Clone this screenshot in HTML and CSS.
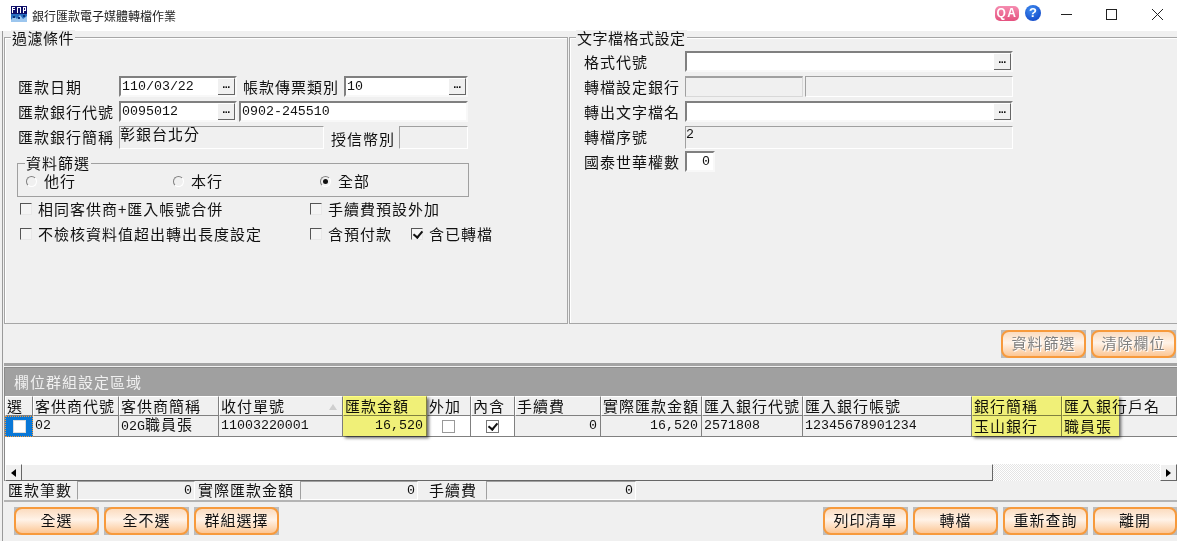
FILE: index.html
```html
<!DOCTYPE html>
<html lang="zh-Hant">
<head>
    <meta charset="UTF-8">
    <meta name="viewport" content="width=device-width, initial-scale=1.0">
    <title>銀行匯款電子媒體轉檔作業</title>
    <link rel="stylesheet" href="styles.css">
</head>
<body>
    <div class="titlebar">
        <svg class="app-icon" width="16" height="16" viewBox="0 0 16 16">
            <rect width="16" height="16" fill="#10106a"/>
            <rect x="1" y="1" width="3" height="1" fill="#fff"/><rect x="1" y="1" width="1" height="6" fill="#fff"/><rect x="1" y="3" width="3" height="1" fill="#fff"/>
            <rect x="6" y="1" width="1" height="6" fill="#fff"/><rect x="9" y="1" width="1" height="6" fill="#fff"/><rect x="6" y="1" width="4" height="1" fill="#fff"/>
            <rect x="12" y="1" width="1" height="6" fill="#fff"/><rect x="12" y="1" width="3" height="1" fill="#fff"/><rect x="14" y="1" width="1" height="3" fill="#fff"/><rect x="12" y="4" width="3" height="1" fill="#fff"/>
            <rect y="8" width="16" height="8" fill="#2a6fc0"/>
            <path d="M0 14l3-4 3 3 3-4 3 4 4-3v6H0z" fill="#9cc6ee"/>
            <path d="M2 10h2v2H2zM7 11h2v2H7zM12 9h2v2h-2z" fill="#0d2f78"/>
        </svg>
        <span class="title-text">銀行匯款電子媒體轉檔作業</span>
        <div class="title-tools">
            <span class="qa-icon">QA</span>
            <span class="help-icon">?</span>
        </div>
        <div class="win-btns">
            <svg width="46" height="31" viewBox="0 0 46 31"><path d="M22 14.500h11" stroke="#222" fill="none"/></svg>
            <svg width="46" height="31" viewBox="0 0 46 31"><rect x="21.500" y="9.500" width="10" height="10" stroke="#222" fill="none"/></svg>
            <svg width="46" height="31" viewBox="0 0 46 31"><path d="M21 9l11 11M32 9L21 20" stroke="#222" fill="none"/></svg>
        </div>
    </div>

    <div class="window">
        <div class="top">
            <div class="panel panel-left">
                <div class="legend">過濾條件</div>
                <div class="form-left">
                    <div class="row">
                        <label class="lbl lbl-left">匯款日期</label>
                        <div class="input w118"><span class="val">110/03/22</span><span class="more">...</span></div>
                        <label class="lbl lbl-type">帳款傳票類別</label>
                        <div class="input w124"><span class="val">10</span><span class="more">...</span></div>
                    </div>
                    <div class="row">
                        <label class="lbl lbl-left">匯款銀行代號</label>
                        <div class="input w118"><span class="val">0095012</span><span class="more">...</span></div>
                        <div class="input w229"><span class="val">0902-245510</span></div>
                    </div>
                    <div class="row row-ro">
                        <label class="lbl lbl-left">匯款銀行簡稱</label>
                        <div class="readonly w205"><span class="ro-text">彰銀台北分</span></div>
                        <label class="lbl lbl-credit">授信幣別</label>
                        <div class="readonly w69"></div>
                    </div>
                </div>

                <div class="filter-box">
                    <div class="filter-legend">資料篩選</div>
                    <div class="radio-row">
                        <span class="opt"><i class="radio"></i>他行</span>
                        <span class="opt"><i class="radio"></i>本行</span>
                        <span class="opt"><i class="radio on"></i>全部</span>
                    </div>
                </div>

                <div class="checks">
                    <span class="chk-item"><i class="chk"></i>相同客供商+匯入帳號合併</span>
                    <span class="chk-item"><i class="chk"></i>手續費預設外加</span>
                    <span></span>
                    <span class="chk-item"><i class="chk"></i>不檢核資料值超出轉出長度設定</span>
                    <span class="chk-item"><i class="chk"></i>含預付款</span>
                    <span class="chk-item"><i class="chk on"></i>含已轉檔</span>
                </div>
            </div>

            <div class="panel panel-right">
                <div class="legend">文字檔格式設定</div>
                <div class="form-right">
                    <div class="row">
                        <label class="lbl lbl-right">格式代號</label>
                        <div class="input w328"><span class="more">...</span></div>
                    </div>
                    <div class="row">
                        <label class="lbl lbl-right">轉檔設定銀行</label>
                        <div class="readonly w118 sunken"></div>
                        <div class="readonly w208"></div>
                    </div>
                    <div class="row">
                        <label class="lbl lbl-right">轉出文字檔名</label>
                        <div class="input w328"><span class="more">...</span></div>
                    </div>
                    <div class="row row-ro">
                        <label class="lbl lbl-right">轉檔序號</label>
                        <div class="readonly w328"><span class="ro-num">2</span></div>
                    </div>
                    <div class="row">
                        <label class="lbl lbl-right">國泰世華權數</label>
                        <div class="input w30 right"><span class="val">0</span></div>
                    </div>
                </div>
            </div>
        </div>

        <div class="actions">
            <button class="btn disabled"><span>資料篩選</span></button>
            <button class="btn disabled"><span>清除欄位</span></button>
        </div>

        <div class="grid-panel">
            <div class="grid-title">欄位群組設定區域</div>
            <table class="grid">
                <colgroup>
                    <col class="c28"><col class="c86"><col class="c100"><col class="c124"><col class="c84"><col class="c44"><col class="c44"><col class="c86"><col class="c101"><col class="c101"><col class="c169"><col class="c90"><col class="c115">
                </colgroup>
                <thead>
                    <tr>
                        <th>選</th><th>客供商代號</th><th>客供商簡稱</th><th class="sorted">收付單號<i class="sort-arrow"></i></th><th>匯款金額</th><th>外加</th><th>內含</th><th>手續費</th><th>實際匯款金額</th><th>匯入銀行代號</th><th>匯入銀行帳號</th><th>銀行簡稱</th><th>匯入銀行戶名</th>
                    </tr>
                </thead>
                <tbody>
                    <tr>
                        <td class="sel"><i class="sel-box"></i></td>
                        <td class="mono">02</td>
                        <td><span class="mono">02G</span>職員張</td>
                        <td class="mono">11003220001</td>
                        <td class="mono num">16,520</td>
                        <td class="white center"><i class="chk flat"></i></td>
                        <td class="white center"><i class="chk flat on"></i></td>
                        <td class="mono num">0</td>
                        <td class="mono num">16,520</td>
                        <td class="mono">2571808</td>
                        <td class="mono">12345678901234</td>
                        <td>玉山銀行</td>
                        <td>職員張</td>
                    </tr>
                </tbody>
            </table>
            <div class="mark mark-amount"></div>
            <div class="mark mark-bank"></div>
            <div class="grid-blank"></div>
            <div class="hscroll">
                <span class="arrow-btn"><i class="tri tri-left"></i></span>
                <span class="thumb"></span>
                <span class="track"></span>
                <span class="arrow-btn"><i class="tri tri-right"></i></span>
            </div>
        </div>

        <div class="summary">
            <span class="sum-label w69">匯款筆數</span>
            <span class="sum-box w118">0</span>
            <span class="sum-label w102">實際匯款金額</span>
            <span class="sum-box w118">0</span>
            <span class="sum-label w65 sum-pad">手續費</span>
            <span class="sum-box w150">0</span>
        </div>

        <div class="footer">
            <div class="btn-group">
                <button class="btn"><span>全選</span></button>
                <button class="btn"><span>全不選</span></button>
                <button class="btn"><span>群組選擇</span></button>
            </div>
            <div class="btn-group">
                <button class="btn"><span>列印清單</span></button>
                <button class="btn"><span>轉檔</span></button>
                <button class="btn"><span>重新查詢</span></button>
                <button class="btn btn-last"><span>離開</span></button>
            </div>
        </div>
    </div>
</body>
</html>
```
FILE: styles.css
```css
* {
    box-sizing: border-box;
}

html, body {
    margin: 0;
    height: 541px;
    overflow: hidden;
}

body {
    background-color: #f0f0f0;
    color: #111;
    font-family: "Noto Sans CJK TC", "Liberation Sans", sans-serif;
    font-size: 15px;
    line-height: 18px;
}

/* Title bar */
.titlebar {
    display: flex;
    align-items: center;
    height: 31px;
    padding-left: 11px;
    background-color: #fff;
}

.app-icon {
    margin: 0 5px 3px 0;
}

.title-text {
    font-size: 12px;
    color: #222;
}

.title-tools {
    display: flex;
    align-items: center;
    gap: 6px;
    margin: 0 -2px 5px auto;
}

.qa-icon {
    width: 24px;
    height: 15px;
    border-radius: 5px;
    background: linear-gradient(#f58cb0, #e5527f);
    color: #fff;
    font: bold 12px/15px "Liberation Sans", sans-serif;
    letter-spacing: 1.500px;
    text-align: center;
}

.help-icon {
    width: 16px;
    height: 16px;
    border-radius: 50%;
    background: radial-gradient(circle at 40% 30%, #3f8cf0, #0a3cc0);
    color: #fff;
    font: bold 13px/16px "Liberation Sans", sans-serif;
    text-align: center;
}

.win-btns {
    display: flex;
    align-items: center;
}

.win-btns svg {
    display: block;
}

/* Window body */
.window {
    height: 510px;
    margin-left: 2px;
    padding-left: 1px;
    border-left: 1px solid #9a9a9a;
}

.top {
    display: flex;
    height: 293px;
    gap: 1px;
}

.panel {
    margin-top: 6px;
    border: 1px solid #a6a6a6;
    box-shadow: inset 1px 1px 0 #fff;
}

.panel-left {
    width: 564px;
    padding: 0 13px;
}

.panel-right {
    flex: 1;
    border-right: 0;
    padding-left: 14px;
}

.legend {
    width: fit-content;
    height: 16px;
    margin: -8px 0 0 -7px;
    padding: 0 1px;
    background-color: #f0f0f0;
    line-height: 16px;
    letter-spacing: 0.5px;
}

.panel-right .legend {
    margin-left: -8px;
}

/* Forms */
.row {
    display: flex;
    align-items: stretch;
    height: 21px;
    margin-bottom: 4px;
}

.row-ro {
    height: 23px;
    margin-bottom: 2px;
}

.form-left {
    margin-top: 30px;
}

.form-right {
    margin-top: 5px;
}

.lbl {
    flex: none;
    line-height: 22px;
    letter-spacing: 1px;
    white-space: nowrap;
}

.lbl-left,
.lbl-right {
    width: 101px;
}

.lbl-type {
    width: 95px;
    margin: 0 6px;
}

.lbl-credit {
    width: 62px;
    margin: 2px 6px 0 7px;
}

.input {
    display: flex;
    flex: none;
    align-items: stretch;
    justify-content: space-between;
    border: 2px solid;
    border-color: #808080 #f8f8f8 #f8f8f8 #808080;
    background-color: #fff;
}

.input + .input {
    margin-left: 2px;
}

.right {
    justify-content: flex-end;
}

.val {
    padding-left: 1px;
    font-family: "Liberation Mono", monospace;
    font-size: 13.3px;
    line-height: 17px;
}

.right .val {
    padding: 0 3px 0 0;
}

.more {
    width: 17px;
    margin-left: auto;
    background-color: #f0f0f0;
    border-right: 1px solid #666;
    border-bottom: 1px solid #666;
    border-top: 1px solid #fff;
    font: bold 11px/11px "Liberation Sans", sans-serif;
    letter-spacing: -0.5px;
    text-align: center;
}

.readonly {
    flex: none;
    border: 1px solid;
    border-color: #a0a0a0 #fff #fff #a0a0a0;
    background-color: #f0f0f0;
}

.sunken {
    margin-right: 2px;
    border-top-width: 2px;
    border-right-color: #d8d8d8;
    border-bottom-color: #d8d8d8;
}

.ro-text {
    display: block;
    line-height: 13px;
    letter-spacing: 1px;
}

.ro-num {
    display: block;
    font-family: "Liberation Mono", monospace;
    font-size: 13.3px;
    line-height: 16px;
}

.w30 { width: 30px; }
.w65 { width: 65px; }
.w69 { width: 69px; }
.w102 { width: 102px; }
.w118 { width: 118px; }
.w124 { width: 124px; }
.w150 { width: 150px; }
.w205 { width: 205px; }
.w208 { width: 208px; }
.w229 { width: 229px; }
.w328 { width: 328px; }

/* Filter box */
.filter-box {
    width: 452px;
    height: 34px;
    margin: 14px 0 0 -1px;
    border: 1px solid #a0a0a0;
}

.filter-legend {
    width: fit-content;
    height: 14px;
    margin: -9px 0 0 7px;
    padding: 0 1px;
    background-color: #f0f0f0;
    line-height: 16px;
    letter-spacing: 1px;
}

.radio-row {
    display: grid;
    grid-template-columns: repeat(3, 147px);
    margin: 3px 0 0 8px;
}

.opt {
    display: flex;
    align-items: center;
    line-height: 18px;
    letter-spacing: 1px;
}

.radio {
    position: relative;
    width: 11px;
    height: 11px;
    margin-right: 7px;
    border: 1px solid;
    border-color: #808080 #fff #fff #808080;
    border-radius: 50%;
    background-color: #f0f0f0;
}

.radio.on::after {
    content: "";
    position: absolute;
    top: 2px;
    left: 2px;
    width: 5px;
    height: 5px;
    border-radius: 50%;
    background-color: #111;
}

/* Check boxes */
.checks {
    display: grid;
    grid-template-columns: 290px 101px 1fr;
    grid-auto-rows: 25px;
    margin: -1px 0 0 2px;
}

.chk-item {
    display: flex;
    align-items: center;
    letter-spacing: 1px;
    white-space: nowrap;
}

.chk {
    position: relative;
    flex: none;
    display: inline-block;
    width: 12px;
    height: 12px;
    margin-right: 6px;
    border: 1px solid;
    border-color: #555 #e8e8e8 #e8e8e8 #555;
    background-color: #f4f4f4;
}

.chk.on::after {
    content: "";
    position: absolute;
    top: 0;
    left: 3px;
    width: 4px;
    height: 7px;
    border: solid #111;
    border-width: 0 2px 2px 0;
    transform: rotate(40deg);
}

.chk.flat {
    display: block;
    width: 13px;
    height: 13px;
    margin: 0 auto;
    border-color: #999;
    background-color: #fff;
}

.chk.flat.on {
    border-color: #777;
}

/* Buttons */
.actions {
    display: flex;
    justify-content: flex-end;
    gap: 5px;
    height: 42px;
    padding: 6px 1px 0 0;
    border-bottom: 3px solid #a4a4a4;
}

.btn {
    width: 85px;
    height: 28px;
    padding: 0;
    border: 0;
    background-color: #bcbcbc;
    color: #111;
    font-family: inherit;
    font-size: 15px;
    letter-spacing: 1px;
}

.btn span {
    display: block;
    height: 100%;
    border: 2px solid #f79a3c;
    border-radius: 8px;
    background: linear-gradient(#fbdcc0, #fff3e8 45%, #fcc694);
    line-height: 21px;
}

.btn-last {
    width: 84px;
}

.btn.disabled {
    color: #808080;
    text-shadow: 1px 1px 0 #fff;
}

/* Grid panel */
.grid-panel {
    position: relative;
    height: 114px;
    margin-top: 1px;
    border: 1px solid #8a8a8a;
    border-right: 0;
    border-bottom-width: 2px;
    background-color: #fff;
}

.grid-title {
    height: 28px;
    padding-left: 9px;
    background-color: #a0a0a0;
    color: #f0f0f0;
    line-height: 27px;
    letter-spacing: 1px;
}

.grid {
    width: 1172px;
    table-layout: fixed;
    border-collapse: separate;
    border-spacing: 0;
}

.c28 { width: 28px; }
.c44 { width: 44px; }
.c84 { width: 84px; }
.c86 { width: 86px; }
.c90 { width: 90px; }
.c100 { width: 100px; }
.c101 { width: 101px; }
.c115 { width: 115px; }
.c124 { width: 124px; }
.c169 { width: 169px; }

.grid th {
    height: 20px;
    padding: 0 0 1px 1px;
    border-top: 1px solid #fff;
    border-left: 1px solid #fff;
    border-right: 1px solid #808080;
    border-bottom: 1px solid #808080;
    background-color: #f0f0f0;
    font-weight: normal;
    line-height: 16px;
    letter-spacing: 1px;
    text-align: left;
    white-space: nowrap;
}

.sorted {
    position: relative;
}

.sort-arrow {
    position: absolute;
    right: 5px;
    top: 7px;
    border-left: 4px solid transparent;
    border-right: 4px solid transparent;
    border-bottom: 6px solid #cfcfcf;
}

.grid td {
    height: 19px;
    padding: 0 1px 1px 2px;
    border-right: 1px solid #808080;
    border-bottom: 1px solid #808080;
    background-color: #f0f0f0;
    line-height: 16px;
    letter-spacing: 1px;
    white-space: nowrap;
}

.grid td.white {
    background-color: #fff;
}

.grid td.center {
    padding: 0;
}

.grid td:last-child {
    border-right: 0;
}

.mono,
.grid td.mono {
    font-family: "Liberation Mono", monospace;
    font-size: 13.3px;
    letter-spacing: 0;
}

.grid td.num {
    padding-right: 3px;
    text-align: right;
}

.grid td.sel {
    padding: 0;
    border: 1px dotted #f59a3c;
    background-color: #0a78d7;
}

.sel-box {
    display: block;
    width: 13px;
    height: 13px;
    margin: 0 auto;
    border: 1px solid #ddd;
    background-color: #fff;
}

/* Yellow highlights over the columns */
.mark {
    position: absolute;
    top: 28px;
    height: 40px;
    background-color: #ffff80;
    mix-blend-mode: multiply;
    box-shadow: 2px 2px 3px rgba(0, 0, 0, 0.6);
}

.mark-amount {
    left: 338px;
    width: 84px;
}

.mark-bank {
    left: 967px;
    width: 147px;
}

.grid-blank {
    height: 27px;
}

.hscroll {
    display: flex;
    height: 17px;
}

.arrow-btn {
    display: flex;
    flex: none;
    align-items: center;
    justify-content: center;
    width: 17px;
    border: 1px solid;
    border-color: #fff #666 #666 #fff;
    background-color: #f0f0f0;
}

.tri {
    border-top: 4px solid transparent;
    border-bottom: 4px solid transparent;
}

.tri-left {
    border-right: 5px solid #000;
}

.tri-right {
    border-left: 5px solid #000;
}

.thumb {
    width: 971px;
    border-top: 1px solid #fff;
    border-right: 1px solid #666;
    border-bottom: 1px solid #666;
    background-color: #f0f0f0;
}

.track {
    flex: 1;
    background: repeating-conic-gradient(#e4e4e4 0% 25%, #fff 0% 50%) 0 0 / 2px 2px;
}

/* Totals */
.summary {
    display: flex;
    height: 21px;
    padding-left: 2px;
    border-bottom: 2px solid #b4b4b4;
}

.sum-label {
    flex: none;
    margin-right: 2px;
    padding-left: 2px;
    line-height: 18px;
    letter-spacing: 1px;
    white-space: nowrap;
}

.sum-pad {
    padding-left: 10px;
}

.sum-box {
    flex: none;
    margin-right: 1px;
    padding-right: 2px;
    border: 1px solid;
    border-color: #a0a0a0 #fff #fff #a0a0a0;
    font-family: "Liberation Mono", monospace;
    font-size: 13.3px;
    line-height: 17px;
    text-align: right;
}

.footer {
    display: flex;
    justify-content: space-between;
    padding: 5px 0 0 10px;
}

.btn-group {
    display: flex;
    gap: 5px;
}
```
